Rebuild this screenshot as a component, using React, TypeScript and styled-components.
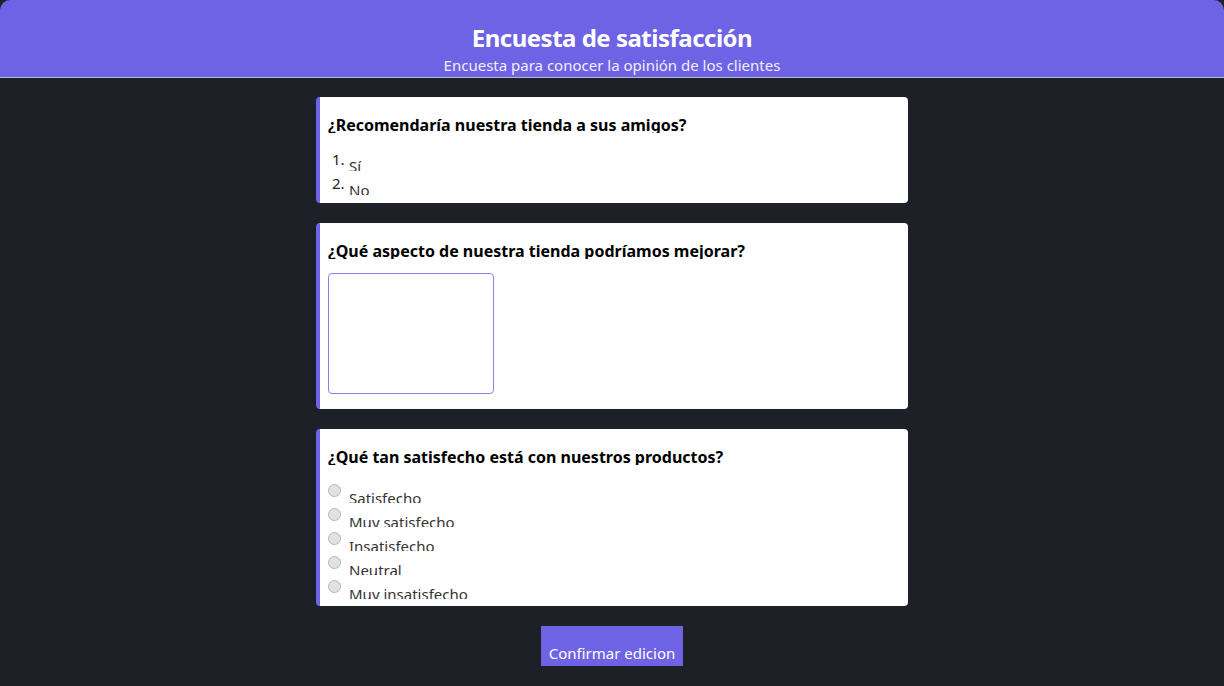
import React from "react";
import styled, { createGlobalStyle } from "styled-components";

const Global = createGlobalStyle`
  html, body { margin: 0; padding: 0; background: #ffffff; }
  body { font-family: "Noto Sans", "Open Sans", sans-serif; }
  * { box-sizing: border-box; }
`;

const Page = styled.div`
  min-height: 686px;
  background: #1e2028;
  display: flex;
  flex-direction: column;
  align-items: center;
`;

const Header = styled.header`
  width: 100%;
  height: 78px;
  background: #6e63e4;
  border-radius: 10px 10px 0 0;
  border-bottom: 1px solid #b9b9c4;
  display: flex;
  flex-direction: column;
  align-items: center;
  padding-top: 23px;
  color: #ffffff;
`;

const Title = styled.h1`
  margin: 0;
  font-size: 24px;
  letter-spacing: -0.5px;
  line-height: 30px;
  font-weight: 700;
`;

const Subtitle = styled.p`
  margin: 2px 0 0 0;
  font-size: 15px;
  line-height: 20px;
  color: #f1effd;
`;

const Form = styled.main`
  width: 592px;
  display: flex;
  flex-direction: column;
  gap: 20px;
  padding-top: 19px;
  align-items: stretch;
`;

const Card = styled.section<{ $pb: number }>`
  background: #ffffff;
  border-left: 4px solid #6e63e4;
  border-radius: 4px;
  padding: 17px 8px ${(p) => p.$pb}px 8px;
  display: flex;
  flex-direction: column;
`;

const Question = styled.h2`
  margin: 0;
  font-size: 16px;
  font-weight: 700;
  line-height: 22px;
  height: 19px;
  overflow: hidden;
  color: #000000;
`;

const OptionList = styled.ol<{ $mt: number }>`
  list-style: none;
  margin: ${(p) => p.$mt}px 0 0 0;
  padding: 0;
  display: flex;
  flex-direction: column;
  gap: 3px;
`;

const Option = styled.li`
  height: 21px;
  overflow: hidden;
  display: flex;
  align-items: flex-start;
  color: #333333;
  font-size: 15px;
`;

const Number = styled.span`
  width: 21px;
  padding-left: 4px;
  line-height: 19px;
  color: #222;
`;

const Radio = styled.span`
  width: 13px;
  height: 13px;
  margin-top: 2px;
  margin-right: 8px;
  border-radius: 50%;
  background: #e2e2e2;
  border: 1px solid #b3b3b3;
  flex: none;
`;

const OptionText = styled.span`
  padding-top: 6px;
  line-height: 21px;
`;

const TextArea = styled.textarea`
  margin-top: 14px;
  width: 166px;
  height: 121px;
  border: 1px solid #8a80ee;
  border-radius: 4px;
  resize: none;
  outline: none;
  background: #fff;
`;

const Actions = styled.div`
  display: flex;
  justify-content: center;
`;

const Button = styled.button`
  width: 142px;
  height: 40px;
  background: #6e63e4;
  color: #ffffff;
  border: none;
  border-radius: 0;
  font-family: inherit;
  font-size: 15px;
  padding: 14px 0 0 0;
  line-height: 25px;
`;

const satisfaction = [
  "Satisfecho",
  "Muy satisfecho",
  "Insatisfecho",
  "Neutral",
  "Muy insatisfecho",
];

export default function App() {
  return (
    <>
      <Global />
      <Page>
        <Header>
          <Title>Encuesta de satisfacción</Title>
          <Subtitle>Encuesta para conocer la opinión de los clientes</Subtitle>
        </Header>
        <Form>
          <Card $pb={8}>
            <Question>¿Recomendaría nuestra tienda a sus amigos?</Question>
            <OptionList $mt={17}>
              {["Sí", "No"].map((o, i) => (
                <Option key={o}>
                  <Number>{i + 1}.</Number>
                  <OptionText>{o}</OptionText>
                </Option>
              ))}
            </OptionList>
          </Card>
          <Card $pb={15}>
            <Question>¿Qué aspecto de nuestra tienda podríamos mejorar?</Question>
            <TextArea />
          </Card>
          <Card $pb={7}>
            <Question>¿Qué tan satisfecho está con nuestros productos?</Question>
            <OptionList $mt={17}>
              {satisfaction.map((o) => (
                <Option key={o}>
                  <Radio />
                  <OptionText>{o}</OptionText>
                </Option>
              ))}
            </OptionList>
          </Card>
          <Actions>
            <Button>Confirmar edicion</Button>
          </Actions>
        </Form>
      </Page>
    </>
  );
}
